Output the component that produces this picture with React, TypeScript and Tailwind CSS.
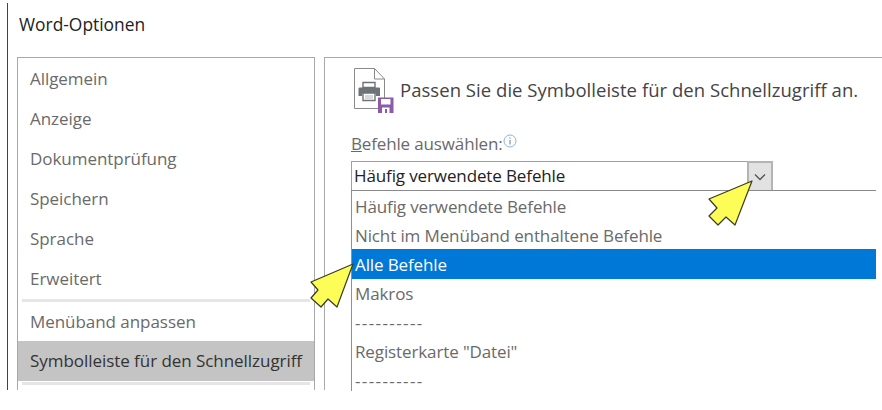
const font = "font-['Open_Sans','Noto_Sans',sans-serif]";

const sidebarTop = ["Allgemein", "Anzeige", "Dokumentprüfung", "Speichern", "Sprache", "Erweitert"];
const commands = ["Häufig verwendete Befehle", "Nicht im Menüband enthaltene Befehle", "Alle Befehle", "Makros", "----------", 'Registerkarte "Datei"', "----------"];

function SideItem({ label, active }: { label: string; active?: boolean }) {
  return (
    <div className={`h-10 pl-3 flex items-center text-[17px] tracking-[-0.05px] ${active ? "bg-[#c4c4c4] text-[#333]" : "text-[#6a6a6a]"}`}>
      {label}
    </div>
  );
}

function Arrow({ points, className }: { points: string; className: string }) {
  return (
    <svg className={`absolute ${className}`} width="46" height="46" viewBox="0 0 46 46">
      <polygon points={points} fill="#fdfd58" stroke="#3c3c1e" strokeWidth="1.2" strokeLinejoin="round" />
    </svg>
  );
}

function DocIcon() {
  return (
    <svg width="42" height="46" viewBox="0 0 42 46" className="shrink-0">
      <path d="M1.5 1.5H21.5L31.5 12V41.5H1.5Z M21.5 1.5V12H31.5" fill="#fff" stroke="#8a8a8a" strokeWidth="1" />
      <path d="M10 15.5H22V20.5H10Z" fill="#fff" stroke="#6e7378" strokeWidth="1.4" />
      <path d="M7 20.5H26Q27 20.5 27 21.5V29H23V26.5H9V29H5.5V21.5Q5.5 20.5 7 20.5Z" fill="#6e7378" />
      <path d="M10 26H22V33.5H10Z" fill="#fff" stroke="#6e7378" strokeWidth="1.4" />
      <path d="M12 29H20M12 31H20" stroke="#9a9ea2" strokeWidth="0.8" />
      <path d="M25 30.5H40.5V46H25Z" fill="#8c5aa8" />
      <path d="M28 32H37.5V37.5H28Z" fill="#fff" />
      <path d="M29 40.5H36.5V46H29Z" fill="#fff" />
      <path d="M32 42H34V46H32Z" fill="#8c5aa8" />
    </svg>
  );
}

export default function App() {
  return (
    <div className={`relative w-[882px] h-[410px] overflow-hidden bg-white ${font}`}>
      <div className="absolute top-[3px] left-[7px] h-[387px] w-[875px] border-l border-[#444] pl-[9px] pt-[10px] box-border">
        <h1 className="h-[44px] pl-[2px] text-[17.4px] leading-[23px] text-[#222]">Word-Optionen</h1>
        <div className="flex h-[333px] gap-[9px]">
          <nav className="w-[298px] border-x border-t border-[#a8a8a8] shrink-0">
            <div className="pt-[1px]">
              {sidebarTop.map((s) => <SideItem key={s} label={s} />)}
            </div>
            <div className="h-[3px] mx-1 bg-[#e6e6e6]" />
            <SideItem label="Menüband anpassen" />
            <div className="-mt-[1px]">
              <SideItem label="Symbolleiste für den Schnellzugriff" active />
            </div>
            <div className="h-[3px] mt-[1px] mx-1 bg-[#e6e6e6]" />
          </nav>
          <main className="flex-1 border-l border-t border-[#a8a8a8] pl-[26px] pt-[9px] min-w-0">
            <div className="flex items-start gap-[4px] h-[66px] ml-[2px]">
              <DocIcon />
              <span className="text-[18.5px] leading-6 mt-[11px] translate-x-[1px] tracking-[0.04px] text-[#444] whitespace-nowrap">
                Passen Sie die Symbolleiste für den Schnellzugriff an.
              </span>
            </div>
            <div className="flex items-start h-[28px] text-[17px] leading-[22px] text-[#6a6a6a] tracking-[-0.15px]">
              <span><span className="underline">B</span>efehle auswählen:</span>
              <svg width="14" height="14" viewBox="0 0 14 14" className="mt-[1px]">
                <circle cx="7" cy="7" r="6" fill="#fff" stroke="#8fb4d8" />
                <path d="M7 6V10.5M7 3.5V4.7" stroke="#5f7f9f" strokeWidth="1" />
              </svg>
            </div>
            <div className="w-[525px] h-[30px] flex border-b border-[#8a8a8a]">
              <div className="w-[396px] border-t border-l border-[#a0a0a0] pl-[2px] flex items-center text-[17px] tracking-[-0.12px] text-[#222]">
                Häufig verwendete Befehle
              </div>
              <div className="w-[26px] bg-[#e2e2e2] border-2 border-b-0 border-[#b4b4b4] flex items-center justify-center">
                <svg width="12" height="8" viewBox="0 0 12 8"><path d="M1 1.5L6 6.5L11 1.5" fill="none" stroke="#555" strokeWidth="1.3" /></svg>
              </div>
            </div>
            <ul className="w-[525px] h-[200px] border-l border-[#909090] overflow-hidden">
              {commands.map((c, i) => (
                <li
                  key={i}
                  className={`pl-[3px] flex items-center text-[17px] ${i === 2 ? "h-[30px] bg-[#0078d7] text-white pt-[1px]" : i < 2 ? "h-[29px] pt-[2px] text-[#6a6a6a]" : "h-[29px] text-[#6a6a6a]"} ${c.startsWith("-") ? "tracking-[1.4px]" : "tracking-[-0.12px]"}`}
                >
                  {c}
                </li>
              ))}
            </ul>
          </main>
        </div>
      </div>
      <Arrow className="left-[708px] top-[180px]" points="44,1 1,19 9,28 1,36 10,45 18,37 27,45" />
      <Arrow className="left-[310px] top-[263px]" points="43,1 1,19 8,27 1,35 11,44 18,36 27,44" />
    </div>
  );
}
